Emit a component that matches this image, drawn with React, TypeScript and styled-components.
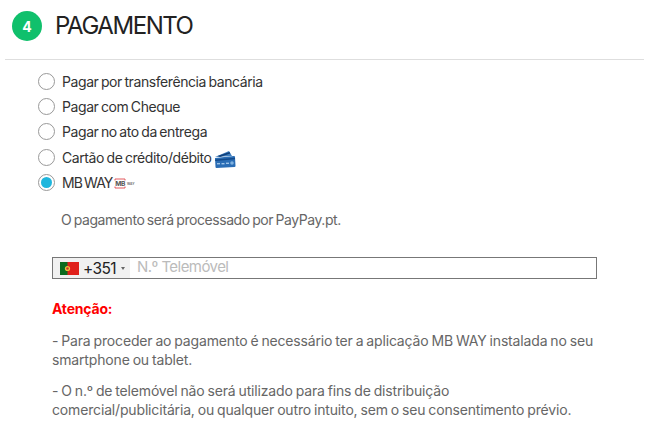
import React from "react";
import styled, { createGlobalStyle } from "styled-components";

const Global = createGlobalStyle`
  html, body { margin: 0; padding: 0; background: #fff; }
  body { font-family: Inter, "Liberation Sans", sans-serif; width: 648px; height: 437px; overflow: hidden; }
`;
const Page = styled.div`
  width: 648px;
  height: 437px;
  padding: 0 4px 0 5px;
  box-sizing: border-box;
`;
const Header = styled.header`
  height: 59px;
  display: flex;
  align-items: flex-start;
  gap: 14px;
  padding: 11px 0 0 7px;
  box-sizing: border-box;
`;
const Badge = styled.span`
  width: 30px;
  height: 30px;
  border-radius: 50%;
  background: #10c06c;
  color: #fff;
  font-size: 14px;
  font-weight: 700;
  display: flex;
  align-items: center;
  justify-content: center;
`;
const Title = styled.h2`
  margin: 1px 0 0 -1px;
  font-size: 24px;
  line-height: 28px;
  font-weight: 400;
  letter-spacing: -1.45px;
  color: #222;
`;
const Divider = styled.hr`
  margin: 0;
  border: 0;
  height: 1px;
  background: #dedede;
`;
const Methods = styled.div`
  display: flex;
  flex-direction: column;
  padding: 9px 0 0 32px;
`;
const Method = styled.label<{ $last?: boolean }>`
  height: ${(p) => (p.$last ? "26px" : "25px")};
  display: flex;
  align-items: center;
  gap: 7px;
  font-size: 14px;
  line-height: 23px;
  letter-spacing: -0.42px;
  word-spacing: -1px;
  color: #333;
`;
const Radio = styled.span<{ $checked?: boolean }>`
  width: 15px;
  height: 15px;
  border: 1px solid #999;
  border-radius: 50%;
  background: #fff;
  display: flex;
  align-items: center;
  justify-content: center;
  flex: none;
  transform: translateX(1px);
  &::after {
    content: "";
    display: ${(p) => (p.$checked ? "block" : "none")};
    width: 11px;
    height: 11px;
    border-radius: 50%;
    background: #1fb6dd;
  }
`;
const MethodName = styled.span<{ $tight?: boolean }>`
  margin-left: 1px;
  letter-spacing: ${(p) => (p.$tight ? "-0.9px" : "inherit")};
`;
const Detail = styled.div`
  padding: 0 47px;
`;
const Note = styled.p`
  margin: 15px 0 0 9px;
  font-size: 14px;
  line-height: 20px;
  letter-spacing: -0.44px;
  word-spacing: -1px;
  color: #666;
`;
const PhoneField = styled.div`
  margin-top: 27px;
  height: 22px;
  border: 1px solid #777;
  display: flex;
  align-items: stretch;
  box-sizing: border-box;
`;
const Prefix = styled.div`
  width: 77px;
  background: #f1f1f1;
  display: flex;
  align-items: center;
  padding-left: 7px;
  box-sizing: border-box;
  color: #222;
  font-size: 15.5px;
  letter-spacing: -0.6px;
`;
const Dial = styled.span`
  margin-left: 4px;
`;
const Caret = styled.span`
  margin-left: 5px;
  width: 0;
  height: 0;
  border-left: 2.5px solid transparent;
  border-right: 2.5px solid transparent;
  border-top: 3px solid #666;
`;
const Placeholder = styled.span`
  margin-left: 7px;
  font-size: 15px;
  line-height: 18px;
  letter-spacing: -0.55px;
  color: #bbb;
`;
const Warning = styled.div`
  margin: 20px 0 5px;
  font-size: 14px;
  line-height: 20px;
  font-weight: 700;
  letter-spacing: -0.2px;
  color: #f00;
`;
const Para = styled.p`
  margin: 12px 0 0;
  font-size: 14px;
  line-height: 19px;
  letter-spacing: -0.16px;
  word-spacing: -0.8px;
  color: #666;
  width: 546px;
`;
const CardsSvg = styled.svg`
  margin: 5px 0 0 -5px;
`;
const MbSvg = styled.svg`
  margin: 1px 0 0 -5px;
`;

const CardsIcon = () => (
  <CardsSvg width="22" height="19" viewBox="0 0 22 19">
    <path d="M1 7 L15 1 L18 6 Z" fill="#3f7fc0" />
    <path d="M3.5 6 L15.5 2 L16.3 3.6 L6 7 Z" fill="#0f3f7a" />
    <path d="M1 8 L20 6 Q21 6 21 7 L21.5 16 Q21.5 17 20.5 17 L2.5 18 Q1.5 18 1.5 17 Z" fill="#2a6db5" />
    <path d="M1.1 9.5 L20.9 7.7 L21 9.2 L1.2 11 Z" fill="#134a8a" />
    <rect x="3" y="13" width="3" height="1.4" fill="#9cc3e8" />
    <rect x="7.5" y="13" width="3" height="1.4" fill="#9cc3e8" />
    <rect x="12" y="12.6" width="3" height="1.4" fill="#9cc3e8" />
    <circle cx="18" cy="13" r="1.8" fill="#7fb2e0" />
  </CardsSvg>
);
const MbIcon = () => (
  <MbSvg width="24" height="11" viewBox="0 0 24 11">
    <path d="M1 2.5 V1 H11 V2.5 M1 8.5 V10 H11 V8.5" fill="none" stroke="#e0474c" strokeWidth="0.9" />
    <text x="1.2" y="8" fontSize="6.6" fontWeight="700" letterSpacing="-0.3" wordSpacing="0" fill="#555">MB</text>
    <text x="13" y="6.8" fontSize="3.2" fontWeight="700" letterSpacing="0" fill="#777">WAY</text>
  </MbSvg>
);
const Flag = () => (
  <svg width="19" height="13" viewBox="0 0 19 13">
    <rect width="19" height="13" fill="#e0201b" />
    <rect width="7.5" height="13" fill="#0b6a1e" />
    <circle cx="7.5" cy="6.5" r="2.6" fill="#e8c23d" />
    <circle cx="7.5" cy="6.5" r="1.3" fill="#d0302a" />
  </svg>
);

export default function App() {
  return (
    <Page>
      <Global />
      <Header>
        <Badge>4</Badge>
        <Title>PAGAMENTO</Title>
      </Header>
      <Divider />
      <Methods>
        <Method><Radio /><MethodName>Pagar por transferência bancária</MethodName></Method>
        <Method><Radio /><MethodName>Pagar com Cheque</MethodName></Method>
        <Method><Radio /><MethodName>Pagar no ato da entrega</MethodName></Method>
        <Method $last><Radio /><MethodName>Cartão de crédito/débito</MethodName><CardsIcon /></Method>
        <Method><Radio $checked /><MethodName $tight>MB WAY</MethodName><MbIcon /></Method>
      </Methods>
      <Detail>
        <Note>O pagamento será processado por PayPay.pt.</Note>
        <PhoneField>
          <Prefix><Flag /><Dial>+351</Dial><Caret /></Prefix>
          <Placeholder>N.º Telemóvel</Placeholder>
        </PhoneField>
        <Warning>Atenção:</Warning>
        <Para>- Para proceder ao pagamento é necessário ter a aplicação MB WAY instalada no seu smartphone ou tablet.</Para>
        <Para>- O n.º de telemóvel não será utilizado para fins de distribuição<br />comercial/publicitária, ou qualquer outro intuito, sem o seu consentimento prévio.</Para>
      </Detail>
    </Page>
  );
}
